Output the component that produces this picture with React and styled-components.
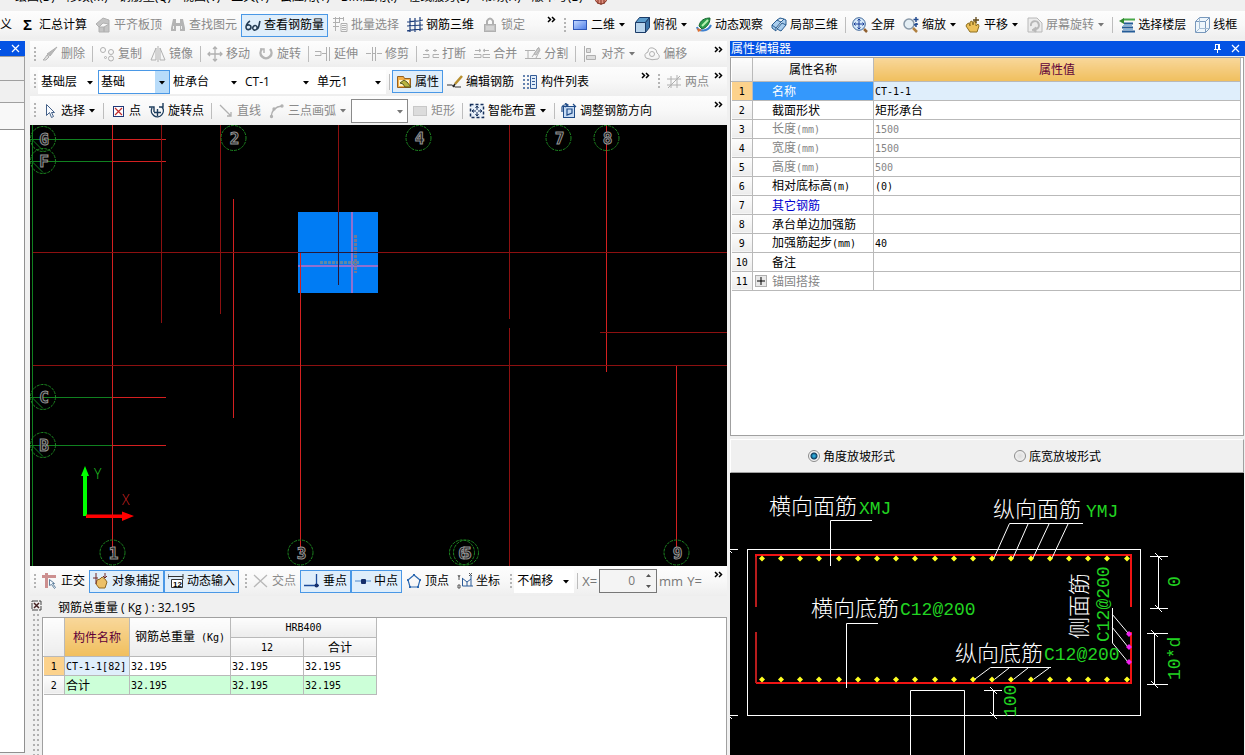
import React from "react";
import styled, { createGlobalStyle, css } from "styled-components";

const Global = createGlobalStyle`
  *, *::before, *::after { box-sizing: border-box; }
  body { margin: 0; background: #f0f0f0; }
  body, button, input, select {
    font-family: "Open Sans", "Noto Sans CJK SC", sans-serif;
    font-size: 12px;
    line-height: 16px;
    color: #000;
  }
`;

/* ---------- shell ---------- */
const Window = styled.div`
  display: flex;
  flex-direction: column;
  height: 100vh;
  overflow: hidden;
  background: #f0f0f0;
`;
const MenuBar = styled.nav`
  display: flex;
  align-items: flex-end;
  gap: 11px;
  height: 11px;
  flex: none;
  padding: 0 0 6px 15px;
  overflow: hidden;
  white-space: nowrap;
`;
const MenuItem = styled.button`
  flex: none;
  border: 0;
  padding: 0;
  background: none;
`;
const Body = styled.main`
  flex: 1;
  min-height: 0;
  display: flex;
`;
const Center = styled.section`
  flex: 1;
  min-width: 0;
  display: flex;
  flex-direction: column;
`;

/* ---------- toolbars ---------- */
const Bar = styled.div`
  display: flex;
  flex: none;
  align-items: stretch;
  height: ${(p) => p.$h}px;
  overflow: hidden;
  background: #f0f0f0;
`;
const Group = styled.div`
  display: flex;
  align-items: center;
  min-width: 0;
  overflow: hidden;
  padding-left: ${(p) => (p.$flush ? 0 : 3)}px;
  ${(p) => (p.$w ? css`flex: none; width: ${p.$w}px;` : css`flex: 1;`)}
  background: linear-gradient(#fdfdfd, #f8f8f8 50%, #eeeeee);
`;
const Grip = styled.span`
  flex: none;
  width: 2px;
  height: 15px;
  margin: 0 2px 0 ${(p) => (p.$apart ? 6 : 1)}px;
  background: repeating-linear-gradient(#b4b4b4 0 2px, transparent 2px 4px);
`;
const Sep = styled.span`
  flex: none;
  width: 1px;
  height: 16px;
  margin: 0 2px 0 3px;
  background: #bdbdbd;
`;
const ToolButton = styled.button`
  flex: none;
  display: flex;
  align-items: center;
  gap: 3px;
  height: 23px;
  padding: 0 3px 0 ${(p) => (p.$edge ? 0 : 3)}px;
  white-space: nowrap;
  border: 1px solid ${(p) => (p.$active ? "#4a98e6" : "transparent")};
  border-left-width: ${(p) => (p.$edge ? 0 : 1)}px;
  background: ${(p) => (p.$active ? "#dfeefb" : "transparent")};
  color: ${(p) => (p.disabled ? "#8a8a8a" : "#000")};
`;
const MoreButton = styled.button`
  flex: none;
  display: flex;
  align-self: stretch;
  margin-left: auto;
  padding: 5px 4px 0 0;
  border: 0;
  background: none;
`;
const ComboBox = styled.span`
  flex: none;
  position: relative;
  display: flex;
  width: ${(p) => p.$w}px;
  height: 24px;
  background: #fff;
  border: 1px solid
    ${(p) => (p.$look === "focus" ? "#4a98e6" : p.$look === "box" ? "#8a8a8a" : "#fff")};
  svg {
    position: absolute;
    right: 0;
    top: 0;
    width: 14px;
    height: 22px;
    pointer-events: none;
    background: ${(p) => (p.$look === "focus" ? "#b8dcfa" : "transparent")};
  }
`;
const ComboSelect = styled.select`
  appearance: none;
  width: 100%;
  border: 0;
  padding: 0 14px 0 2px;
  background: transparent;
  outline: 0;
`;
const Unit = styled.label`
  flex: none;
  padding: 0 2px;
  font-size: 13px;
  color: #777;
`;
const Spinner = styled.span`
  flex: none;
  display: flex;
  align-items: center;
  width: 58px;
  height: 24px;
  padding-right: 4px;
  border: 1px solid #777;
  background: #f4f4f4;
`;
const SpinInput = styled.input`
  flex: 1;
  min-width: 0;
  border: 0;
  padding: 0 10px 0 0;
  text-align: right;
  background: none;
  color: #777;
`;

/* ---------- docked panel titles ---------- */
const TitleBar = styled.header`
  display: flex;
  align-items: center;
  justify-content: flex-end;
  gap: 9px;
  flex: none;
  height: 15px;
  padding: 0 5px 0 1px;
  overflow: hidden;
  background: #0453e4;
  color: #fff;
`;
const TitleText = styled.h2`
  margin: 0 auto 0 0;
  font-size: 12px;
  font-weight: 400;
`;
const TitleButton = styled.button`
  flex: none;
  display: flex;
  border: 0;
  padding: 0;
  background: none;
  color: #fff;
`;

const LeftDock = styled.aside`
  flex: none;
  display: flex;
  flex-direction: column;
  width: 25px;
  margin-right: 5px;
  padding-bottom: 2px;
`;
const LeftTab = styled.div`
  flex: none;
  height: ${(p) => p.$h}px;
  border: solid #a0a0a0;
  border-width: 1px 1px 0 0;
  background: ${(p) => p.$bg};
`;
const LeftTree = styled.div`
  flex: 1;
  border: solid #909090;
  border-width: 1px 1px 1px 0;
  background: #fff;
`;

/* ---------- drawing areas ---------- */
const Viewport = styled.div`
  flex: none;
  height: 441px;
  background: #000;
  svg { display: block; width: 100%; height: 100%; }
`;

/* ---------- weight report ---------- */
const Report = styled.section`
  flex: 1;
  min-height: 0;
  display: flex;
`;
const ReportSide = styled.div`
  flex: none;
  display: flex;
  flex-direction: column;
  align-items: center;
  width: 12px;
  padding-top: 4px;
  gap: 3px;
`;
const ReportHandle = styled.span`
  flex: 1;
  width: 6px;
  background:
    radial-gradient(circle at 1px 1px, #b0b0b0 1px, transparent 1px) 0 0 / 4px 5px;
`;
const ReportClose = styled.button`
  display: flex;
  border: 0;
  padding: 0;
  background: none;
`;
const ReportMain = styled.div`
  flex: 1;
  min-width: 0;
  display: flex;
  flex-direction: column;
`;
const ReportTitle = styled.div`
  flex: none;
  height: 21px;
  padding: 4px 0 0 16px;
`;
const ReportSheet = styled.div`
  flex: 1;
  border: solid #a0a0a0;
  border-width: 1px 1px 0 1px;
  background: #fff;
`;

/* ---------- tables ---------- */
const Grid = styled.table`
  border-collapse: collapse;
  table-layout: fixed;
  width: ${(p) => p.$w};
  font-family: "Noto Sans CJK SC", sans-serif;
`;
const headTones = {
  plain: "linear-gradient(#fdfdfd, #ececec)",
  gold: "linear-gradient(#f8d79a, #f0bf5e)",
};
const Head = styled.th`
  height: ${(p) => p.$h}px;
  padding: 0;
  border: 1px solid #b9b9b9;
  border-top: 0;
  border-left-color: ${(p) => (p.$edge ? "#fff" : "#b9b9b9")};
  font-weight: 400;
  white-space: nowrap;
  background: ${(p) => headTones[p.$tone || "plain"]};
  color: ${(p) => (p.$tone === "gold" ? "#600038" : "#000")};
`;
const RowNo = styled.th`
  height: 19px;
  padding: 0;
  border: 1px solid #b9b9b9;
  border-left: 0;
  font-weight: 400;
  background: ${(p) => (p.$on ? "#fcd28c" : "linear-gradient(#fdfdfd, #ececec)")};
`;
const Cell = styled.td`
  height: 19px;
  padding: 0 1px;
  border: 1px solid #b9b9b9;
  line-height: 16px;
  white-space: nowrap;
  color: ${(p) => p.$color || "#000"};
  background: ${(p) => p.$bg || "#fff"};
`;
const NameBox = styled.span`
  display: flex;
  align-items: center;
  gap: 5px;
  padding-left: ${(p) => (p.$expand ? 1 : 18)}px;
`;
const Expand = styled.button`
  display: flex;
  padding: 1px;
  border: 1px solid #b0b0b0;
  background: #e8e8e8;
`;
const MonoText = styled.span`
  font-family: "DejaVu Sans Mono", monospace;
  font-size: 10px;
`;

/* ---------- property editor ---------- */
const RightDock = styled.aside`
  flex: none;
  display: flex;
  flex-direction: column;
  width: 515px;
  margin-left: 3px;
`;
const PropSheet = styled.div`
  flex: none;
  height: 379px;
  margin: 1px 1px 0 0;
  padding: 0 2px 0 0;
  border: 1px solid #a0a0a0;
  background: #fff;
`;
const RadioStrip = styled.div`
  flex: none;
  display: grid;
  grid-template-columns: 206px 206px;
  align-items: center;
  height: 34px;
  margin: 3px 1px 0 0;
  padding-left: 77px;
  border: 1px solid #a0a0a0;
  border-color: #fff #a0a0a0 #a0a0a0 #fff;
`;
const RadioLabel = styled.label`
  display: flex;
  align-items: center;
  gap: 3px;
  font-family: "Noto Sans CJK SC", sans-serif;
`;
const Radio = styled.input`
  appearance: none;
  width: 12px;
  height: 12px;
  margin: 0;
  border: 1px solid #8c8c8c;
  border-radius: 50%;
  background: radial-gradient(circle, #dcdcdc, #f8f8f8);
  &:checked {
    background: radial-gradient(circle, #2aa8d8 0 1px, #123c5c 3px, #f4f4f4 4px);
  }
`;
const Section = styled.div`
  flex: 1;
  min-height: 0;
  margin-right: 1px;
  background: #000;
  svg { display: block; width: 514px; height: 282px; }
`;

/* ---------- icons ---------- */
const G = "#b0b0b0";
const art = {
  sigma: <text x="3" y="13" fontSize="15" fontWeight="700" fontFamily="Liberation Sans">Σ</text>,
  level: <g fill="#c4c4c4" stroke={G}><path d="M1 7l7-6 6 2v4l-6-1-4 4z" /><path d="M4 10h5v5H4zM9 10l5-3v8H9z" /></g>,
  find: <g fill="#b4b4b4"><path d="M3 2h3v4h4V2h3l2 9v3h-5V9H6v5H1v-3z" /><path d="M3 9h1v3H3zM11 9h1v3h-1z" fill="#eee" /></g>,
  glasses: <g fill="none" stroke="#243c54" strokeWidth="1.6"><path d="M5 4C3 5 1 8 1 10c0 4 5 3 5 0 0-2-3-3-5-1" /><path d="M8 12c-1-3 3-5 4-2 1 3-3 4-4 2M12 12c2 0 2-5 3-8" /></g>,
  batch: <g fill="none" stroke={G}><path d="M1 1.5h10M1 5.5h7M1 9.5h6M3.500 0v14M7.500 0v6M11.500 0v4" /><path d="M9 6.500h6v8H9zM10 8.500h4M10 10.500h4M10 12.500h4" /></g>,
  rebar3d: <g fill="none" stroke="#1f3f7c" strokeWidth="1.200"><path d="M3 1v14M8 1v14M13 0v14M0 5c5-1 9 0 16-2M0 9c5-1 9 0 16-1M0 14c5-2 9-1 16-2" /></g>,
  lock: <g fill="#c2c2c2" stroke={G}><path d="M5 7V4q3-5 6 0v3" fill="none" strokeWidth="2" /><rect x="2.500" y="7.500" width="11" height="7" /><path d="M4 10h8M4 12h8" stroke="#e6e6e6" /></g>,
  plane: <><defs><linearGradient id="pl" x2="1" y2="1"><stop stopColor="#c8dcff" /><stop offset="1" stopColor="#4c7ce8" /></linearGradient></defs><rect x="1.500" y="3.500" width="13" height="9" fill="url(#pl)" stroke="#3058b8" /></>,
  cube: <g stroke="#1c3c68"><path d="M1.500 5.500h10v10h-10z" fill="#b8d4ec" /><path d="M1.500 5.500l4-5h10l-4 5z" fill="#5c9ccc" /><path d="M15.500.5v10l-4 5v-10z" fill="#3c74a8" /></g>,
  orbit: <><path d="M3 9C4 3 9 1 14 1c0 6-4 10-8 11z" fill="#2c9c4c" stroke="#186830" /><path d="M6 9L12 3" stroke="#b8f0b0" strokeWidth="2" /><path d="M1 10c1 5 11 5 14-2" fill="none" stroke="#3c80d0" strokeWidth="2" /><path d="M1 11l1 4 4-2z" fill="#e07030" /></>,
  local3d: <g fill="#a8ccec" stroke="#285c90"><path d="M1 8l5-5 4 2-5 6zM6 12l5-6 4 2-5 6zM1 8v3l4 3v-3M10 5l3-3 2 1v5" /><path d="M6 3l3-2 4 1" /></g>,
  full: <g fill="none"><circle cx="7" cy="7" r="6.300" fill="#d4e8f8" stroke="#3c6498" /><path d="M7 2v10M2 7h10M5.500 3.500L7 2l1.500 1.500M5.500 10.500L7 12l1.500-1.500M3.500 5.500L2 7l1.500 1.500M10.500 5.500L12 7l-1.500 1.500" stroke="#183c98" /><path d="M12 12l3 3" stroke="#906030" strokeWidth="2.500" /></g>,
  zoom: <g fill="none"><circle cx="6" cy="7" r="5" fill="#e4eef4" stroke="#8898a8" strokeWidth="1.500" /><path d="M10 11l4 4" stroke="#b08040" strokeWidth="2.500" /><path d="M13 0v5M10.500 2.500h5M11 8l4-1M13 6v4" stroke="#244c90" strokeWidth="1.500" /></g>,
  pan: <><path d="M2 7l2-1 1 3V5l2-1 1 4 1-4 2 1v4l2-2 1 2-2 6H5L1 9z" fill="#ecc058" stroke="#907020" /><path d="M11 0v6M8 3h6" stroke="#604818" strokeWidth="1.300" /></>,
  screenrot: <g fill="none" stroke="#b8b8b8"><path d="M1 1h9l5 5v9H1z" fill="#ececec" /><path d="M4 9a4 4 0 1 1 5 3" strokeWidth="2" /><path d="M5 13l4-3v5z" fill="#b8b8b8" /></g>,
  floor: <><path d="M4 2.500h12" stroke="#48a848" strokeWidth="2" /><path d="M0 4l5-3v6z" fill="#308830" /><path d="M5 6.500h9M3 10.500h11M3 14.500h13" stroke="#245c98" strokeWidth="2" /><path d="M4 8.500h9M4 12.500h10" stroke="#84b4dc" /></>,
  wire: <g fill="#eef6fc" stroke="#7898bc"><path d="M1.500 4.500h10v11h-10zM1.500 4.500l4-4h10l-4 4M15.500.5v11l-4 4" /><path d="M5.500 1v10.500H15M5.500 11.500l-4 4" fill="none" stroke="#a4bcd4" /></g>,
  erase: <g fill="#b8b8b8" stroke={G}><path d="M15 1L8 10l-3-2z" /><path d="M5 9l2 2-3 3H1l2-2z" fill="#ddd" /></g>,
  copy: <g fill="none" stroke={G}><circle cx="4" cy="4" r="2.500" /><circle cx="12" cy="6" r="2.500" /><circle cx="12" cy="12.500" r="2.500" /><circle cx="6.500" cy="11.500" r="1" /></g>,
  mirror: <g fill="none" stroke={G}><path d="M6 2v12H1zM10 2v12h5zM8 0v16" /></g>,
  move: <g fill="none" stroke={G} strokeWidth="1.300"><path d="M8 1v14M1 8h14M6 3l2-2 2 2M6 13l2 2 2-2M3 6L1 8l2 2M13 6l2 2-2 2" /></g>,
  rotate: <g fill="none" stroke="#b4b4b4" strokeWidth="2.500"><path d="M4 3a5.500 5.500 0 1 0 8 0" /><path d="M2 3h4v4" strokeWidth="1.500" /></g>,
  extend: <g fill="none" stroke={G}><path d="M0 5.500h6v4H0M7 7.500h4M11.500 1v14M14.500 1v14" /></g>,
  trim: <g fill="none" stroke={G}><path d="M0 7.500h5M11 7.500h5M6.500 1v14M9.500 1v14M6 7.500h4" /></g>,
  brk: <g fill="none" stroke={G}><path d="M0 11.500h6v-3H0M16 11.500h-6v-3h6M2 4.500h4M10 4.500h4M4 3v3M12 3v3" /></g>,
  join: <g fill="none" stroke={G}><path d="M0 11.500h7v-3H0M16 11.500H9v-3h7M1 4.500h5M10 4.500h5M5 3l2 1.500L5 6M11 3L9 4.500 11 6" /></g>,
  split: <g fill="none" stroke={G}><path d="M0 4.500h10M0 12.500h16M3 4v8M14 1L7 11M15 4l-4 8" /><path d="M9 8l4-6 2 1-4 6z" fill="#ccc" /></g>,
  align: <g fill="#ddd" stroke={G}><path d="M2.500 0v16" /><path d="M4.500 2.500h4v4h-4zM4.500 9.500h9v4h-9z" /></g>,
  offset: <g fill="none" stroke={G}><path d="M2 12q-3-4 2-6 0-5 5-4 4 1 4 5 4 3 1 6-6 2-12-1z" /><circle cx="8" cy="8" r="2.500" /></g>,
  props: <><path d="M1.500 2.500h6l1 2h6v9h-13z" fill="#f4b048" stroke="#98601c" /><path d="M3 6h10v6H3z" fill="#fff4c8" /><path d="M4 9l4-3 3 2 4 5H9l-2-3z" fill="#b8b440" stroke="#585820" /></>,
  editbar: <g fill="none"><path d="M0 11h5l3 2h6" stroke="#333" /><path d="M15 2L8 10" stroke="#b89030" strokeWidth="2.500" /><path d="M8 10l-2 3" stroke="#222" strokeWidth="1.500" /></g>,
  list: <g fill="none" stroke="#345c98"><path d="M1 2h2M5 2h2M1 6h2M5 6h2M1 10h2M5 10h2M1 14h2M5 14h2" strokeWidth="1.500" /><path d="M8.500 1.500h6v13h-6z" fill="#e0ecf8" /><path d="M10 4.500h3M10 7.500h3M10 10.500h3" /></g>,
  two: <g fill="none" stroke={G}><path d="M5 2v12M11 1v13M1 5h14M1 11h14M2 14L14 2" /></g>,
  pointer: <path d="M4.500 1.500v11l3-3 2 5 2-1-2-4h3z" fill="#f8fbff" stroke="#446088" />,
  point: <g fill="none"><rect x="3.500" y="3.500" width="10" height="10" fill="#fff" stroke="#203878" /><path d="M5 5l7 7M12 5l-7 7" stroke="#c02828" strokeWidth="1.200" /></g>,
  rotpoint: <g fill="none" stroke="#1c3c5c" strokeWidth="1.400"><path d="M3 5a6 6 0 1 0 10-1M0 4h5v5" /><path d="M8.500 6v7M5 9.500h7M10 4h4V0" /></g>,
  line: <path d="M2 2l11 11M13 9v4H9" fill="none" stroke={G} strokeWidth="1.300" />,
  arc: <g fill="none" stroke={G} strokeWidth="1.300"><path d="M2 14Q3 4 13 3" /><circle cx="2.500" cy="13.500" r="1" /><circle cx="5" cy="6" r="1" /><circle cx="13" cy="3" r="1" /></g>,
  rect: <rect x="1.500" y="3.500" width="13" height="9" fill="#dcdcdc" stroke="#c8c8c8" />,
  smart: <g fill="none"><rect x="1.500" y="1.500" width="13" height="13" fill="#e8f0fa" stroke="#16305c" strokeWidth="1.500" strokeDasharray="3 2" /><path d="M8 3v4M8 9v4M3 8h4M9 8h4M6.500 5L8 3l1.500 2M6.500 11L8 13l1.500-2M5 6.500L3 8l2 1.500M11 6.500L13 8l-2 1.500" stroke="#16305c" /></g>,
  adjust: <g fill="none"><rect x="2.500" y="3.500" width="11" height="11" fill="#c8dcf4" stroke="#204c88" /><path d="M6 12V6h5v4zM1 9V4q1-3 5-2M4 0l3 2-3 2M12 1l3 3" stroke="#204c88" strokeWidth="1.200" /></g>,
  ortho: <g fill="none"><path d="M0 3.500h14M4.500 0v15" stroke="#cc8f8f" strokeWidth="3" /><path d="M7.500 6.500v6l2-1 3 4 1-1-3-4h2z" fill="#f4f8fc" stroke="#60809c" /></g>,
  snap: <><path d="M4 7l3-1 2-2 3 2 2 3-2 6H6l-3-4z" fill="#ecc068" stroke="#906820" /><path d="M0 5h5M3 0v11M12 0v5M10 3l2 2 2-2" fill="none" stroke="#702828" /></>,
  dyn: <><path d="M0 3.500h15M0 1v5M15 1v5" stroke="#333" /><path d="M3.500 6.500h11v8h-11z" fill="#fff" stroke="#333" /><text x="5" y="14" fontSize="8" fontWeight="700" fontFamily="Liberation Sans">12</text></>,
  cross: <path d="M1 2l13 12M14 2L1 14" stroke="#b8b8b8" strokeWidth="1.300" />,
  perp: <g fill="none" stroke="#1c4c9c" strokeWidth="1.300"><path d="M0 12.500h15M12.500 1v11" /><circle cx="12.500" cy="12.500" r="2" fill="#16306c" stroke="none" /></g>,
  mid: <g><path d="M0 8h16" stroke="#4c88cc" /><rect x="6" y="6" width="5" height="5" rx="1" fill="#16306c" /></g>,
  vertex: <g fill="none" stroke="#2c68b0"><path d="M8 2l6 5-2 7H4L2 7z" strokeWidth="1.200" /><path d="M8 1v2M1 7h2M13 7h2M4 13v2M12 13v2" strokeWidth="2" /></g>,
  coord: <g fill="none" stroke="#2c5c98"><path d="M5.500 5v8H16M5 5l5 4 4-3M10 9v4M14 2v11" /><path d="M1 2l1 2 1-2M2 4v3M1 12h2v3H1zM12 0l3 3M15 0l-3 3" stroke="#555" /></g>,
};
const Svg16 = styled.svg`
  flex: none;
  width: 16px;
  height: 16px;
`;
const Icon = ({ name }) => (
  <Svg16 viewBox="0 0 16 16" aria-hidden="true">{art[name]}</Svg16>
);
const Down = ({ dim }) => (
  <svg width="8" height="4" viewBox="0 0 8 4" aria-hidden="true">
    <path d="M1 0h6L4 3.500z" fill={dim ? "#777" : "#000"} />
  </svg>
);
const More = () => (
  <MoreButton aria-label="更多">
    <svg width="9" height="7" viewBox="0 0 9 7">
      <path d="M1 1l2.500 2.500L1 6M5 1l2.500 2.500L5 6" fill="none" stroke="#000" strokeWidth="1.500" />
    </svg>
  </MoreButton>
);
const Pin = () => (
  <svg width="9" height="9" viewBox="0 0 9 9">
    <path d="M2.500 0v5M6.500 0v5M2 .5h5M1 5.500h7M4.500 6v3M5.500 0v5" fill="none" stroke="#fff" />
  </svg>
);
const Cross = () => (
  <svg width="9" height="9" viewBox="0 0 9 9">
    <path d="M1 1l7 7M8 1L1 8" stroke="#fff" strokeWidth="1.200" />
  </svg>
);

const Tool = ({ icon, text, off, on, drop, edge }) => (
  <ToolButton disabled={off} $active={on} $edge={edge}>
    {icon && <Icon name={icon} />}
    {text}
    {drop && <Down dim={off} />}
  </ToolButton>
);
const Combo = ({ value, w = 72, look, label }) => (
  <ComboBox $w={w} $look={look}>
    <ComboSelect aria-label={label} defaultValue={value}>
      <option>{value}</option>
    </ComboSelect>
    <svg viewBox="0 0 14 22"><path d="M4 10h6l-3 3.500z" fill={look === "box" ? "#777" : "#000"} /></svg>
  </ComboBox>
);

/* Latin runs are set in the narrow fixed-width face of the data grids. */
const Mixed = ({ children }) =>
  String(children)
    .split(/([\x20-\x7e]+)/)
    .filter(Boolean)
    .map((part, i) =>
      /[\x20-\x7e]/.test(part) ? <MonoText key={i}>{part}</MonoText> : part
    );

/* ---------- plan view ---------- */
const dim = "#8c1010";
const red = "#d42020";
const planLines = [
  [112.5, 125, 112.5, 553, red], [161.5, 125, 161.5, 323, dim], [220.5, 125, 220.5, 314, dim],
  [233.5, 199, 233.5, 418, red], [338.5, 125, 338.5, 212, dim], [509.5, 125, 509.5, 319, dim],
  [509.5, 328, 509.5, 566, dim], [606.5, 125, 606.5, 372, red], [676.5, 365, 676.5, 553, red],
  [33, 252.5, 727, 252.5, dim], [33, 365.5, 727, 365.5, dim], [600, 332.5, 727, 332.5, dim],
];
const axisMarks = [
  [43, 139, "G"], [43, 161, "F"], [43, 397, "C"], [43, 445, "B"],
  [233.5, 138, "2"], [418.5, 138, "4"], [558.5, 138, "7"], [606.5, 138, "8"],
  [112.5, 552.5, "1"], [300.5, 552.5, "3"], [462, 552.5, "6"], [466, 552.5, "5"], [676.5, 552.5, "9"],
];
const PlanText = styled.text`
  font: 700 16px "DejaVu Sans Mono", monospace;
  text-anchor: middle;
  fill: #101010;
  stroke: #949494;
  stroke-width: 1px;
`;
const AxisText = styled.text`
  font: 300 14px "Open Sans", sans-serif;
  fill: ${(p) => p.$c};
`;
const Plan = () => (
  <svg viewBox="30 125 697 441" preserveAspectRatio="xMinYMin slice">
    <path d="M32.500 125v441" stroke="#108020" />
    {[139.5, 161.5, 397.5, 445.5].map((y) => (
      <g key={y}>
        <path d={`M31 ${y}h81M32 ${y}l11 11`} stroke="#108020" fill="none" />
        <path d={`M112 ${y}h54`} stroke={red} />
      </g>
    ))}
    {planLines.map(([x1, y1, x2, y2, c], i) => (
      <line key={i} x1={x1} y1={y1} x2={x2} y2={y2} stroke={c} />
    ))}
    <rect x="298" y="212" width="80" height="81" fill="#007cf4" />
    <path d="M352 212v81M298 266h80" stroke="#9070d0" strokeWidth="2" />
    <path d="M320 262.500h39" stroke="#5c88a8" strokeWidth="3" strokeDasharray="3 1" />
    <path d="M355.500 235v38" stroke="#707898" strokeWidth="3" strokeDasharray="3 1" />
    <path d="M338.500 212v73M298 252.500h80" stroke="#281838" />
    <path d="M300.500 253v300" stroke={red} />
    {axisMarks.map(([x, y, t]) => (
      <g key={t}>
        <circle cx={x} cy={y} r="12.500" fill="none" stroke="#1c8420" strokeDasharray="3 1" />
        <PlanText x={x + 1} y={y + 6}>{t}</PlanText>
      </g>
    ))}
    <path d="M83 516v-40h-2l4-10 4 10h-2v40z" fill="#00ff00" />
    <path d="M86 514.500h36v-3l12 4.500-12 5v-3H86z" fill="#ff0000" />
    <AxisText x="94" y="479" $c="#20c020">Y</AxisText>
    <AxisText x="122" y="505" $c="#d02020">X</AxisText>
  </svg>
);

/* ---------- cap section drawing ---------- */
const barX = [762, 781, 800, 819, 839, 858, 877, 896, 915, 935, 954, 973, 992, 1011, 1031, 1050, 1069, 1088, 1107, 1127];
const Dot = ({ x, y, c = "#ffff20" }) => (
  <path d={`M${x - 3} ${y}l3-3 3 3-3 3z`} fill={c} />
);
const CnText = styled.text`
  font: 300 22px "Noto Sans CJK SC", sans-serif;
  fill: #fff;
`;
const SpecText = styled.text`
  font: 18px "Liberation Mono", monospace;
  fill: #22d322;
`;
const upright = (x, y) => `translate(${x} ${y}) rotate(-90)`;
const CapSection = () => (
  <svg viewBox="730 473 514 282">
    <g fill="none" stroke="#fff">
      <rect x="747.5" y="549.5" width="393" height="166" />
      <path d="M910.500 760V690.500h54V760" />
      <path d="M730 549.500h8M730 551l2 2M730 715.500h8M730 717l2 2" />
    </g>
    <g fill="none" strokeWidth="2">
      <path d="M756 607V555H1131V607M1131 632V683H756" stroke="#f01414" />
      <path d="M756 557V607M756 632V683" stroke="#b81c1c" />
    </g>
    {barX.map((x) => (
      <g key={x}><Dot x={x} y={558.5} /><Dot x={x} y={679.5} /></g>
    ))}
    <g fill="none" stroke="#fff">
      <path d="M872 520.500H830.500V566M878 623.500H846.500V688" />
      <path d="M1083 523.500H1009.500L994 558M1028 524L1013 558M1049 524L1033 558M1068 524L1052 558" />
      <path d="M1051 667.500H990.500L975 679M1009 668L995 679M1028 668L1014 679M1049 668L1034 679" />
      <path d="M1112.500 608V643L1128 662M1112 614L1128 633M1112 627L1128 647" />
      <path d="M1158.500 556V609M1150 556.500h18M1150 608.500h18M1155 553l7 7M1155 605l7 7" />
      <path d="M1154.500 633V685M1147 633.500h21M1147 684.500h21M1151 630l7 7M1151 681l7 7" />
      <path d="M993.500 690V716M984 690.500h18M990 687l7 7M990 712l7 7" />
    </g>
    <Dot x={1129} y={634} c="#f020f0" />
    <Dot x={1129} y={647} c="#f020f0" />
    <Dot x={1129} y={662} c="#f020f0" />
    <CnText x="769" y="514">横向面筋</CnText>
    <SpecText x="859" y="514">XMJ</SpecText>
    <CnText x="993" y="517">纵向面筋</CnText>
    <SpecText x="1086" y="517">YMJ</SpecText>
    <CnText x="811" y="616">横向底筋</CnText>
    <SpecText x="900" y="615">C12@200</SpecText>
    <CnText x="955" y="661">纵向底筋</CnText>
    <SpecText x="1044" y="660">C12@200</SpecText>
    <CnText transform={upright(1087, 639)}>侧面筋</CnText>
    <SpecText transform={upright(1109, 642)}>C12@200</SpecText>
    <SpecText transform={upright(1180, 587)}>0</SpecText>
    <SpecText transform={upright(1180, 680)}>10*d</SpecText>
    <SpecText transform={upright(1016, 717)}>100</SpecText>
  </svg>
);

/* ---------- data ---------- */
const menus = ["绘图(D)", "修改(M)", "钢筋量(Q)", "视图(V)", "工具(T)", "云应用(Y)", "BIM应用(I)", "在线服务(S)", "帮助(H)", "版本号(B)"];
const gray = "#858585";
const properties = [
  ["名称", "CT-1-1"],
  ["截面形状", "矩形承台"],
  ["长度(mm)", "1500", gray],
  ["宽度(mm)", "1500", gray],
  ["高度(mm)", "500", gray],
  ["相对底标高(m)", "(0)"],
  ["其它钢筋", "", "#0000d0"],
  ["承台单边加强筋", ""],
  ["加强筋起步(mm)", "40"],
  ["备注", ""],
  ["锚固搭接", "", gray],
];

export default function App() {
  return (
    <Window>
      <Global />
      <MenuBar>
        {menus.map((m) => <MenuItem key={m}>{m}</MenuItem>)}
        <svg width="14" height="14" viewBox="0 0 14 14">
          <circle cx="7" cy="7" r="6" fill="#e09080" stroke="#803020" />
          <path d="M4 7v6M7 8v6M10 7v6" stroke="#803020" />
        </svg>
      </MenuBar>
      <Bar $h={28}>
        <Group $w={560} $flush>
          <Tool text="义" edge />
          <Tool icon="sigma" text="汇总计算" />
          <Tool icon="level" text="平齐板顶" off />
          <Tool icon="find" text="查找图元" off />
          <Tool icon="glasses" text="查看钢筋量" on />
          <Tool icon="batch" text="批量选择" off />
          <Tool icon="rebar3d" text="钢筋三维" />
          <Tool icon="lock" text="锁定" off />
          <More />
        </Group>
        <Group>
          <Grip />
          <Tool icon="plane" text="二维" drop />
          <Tool icon="cube" text="俯视" drop />
          <Tool icon="orbit" text="动态观察" />
          <Tool icon="local3d" text="局部三维" />
          <Sep />
          <Tool icon="full" text="全屏" />
          <Tool icon="zoom" text="缩放" drop />
          <Tool icon="pan" text="平移" drop />
          <Tool icon="screenrot" text="屏幕旋转" off drop />
          <Sep />
          <Tool icon="floor" text="选择楼层" />
          <Tool icon="wire" text="线框" />
        </Group>
      </Bar>
      <Bar $h={2} />
      <Body>
        <LeftDock>
          <TitleBar>
            <TitleButton aria-label="固定"><Pin /></TitleButton>
            <TitleButton aria-label="关闭"><Cross /></TitleButton>
          </TitleBar>
          <LeftTab $h={24} $bg="#f0f0f0" />
          <LeftTab $h={22} $bg="#f0f0f0" />
          <LeftTab $h={27} $bg="#f8f8f8" />
          <LeftTree />
        </LeftDock>
        <Center>
          <Bar $h={26}>
            <Group>
              <Grip />
              <Tool icon="erase" text="删除" off />
              <Sep />
              <Tool icon="copy" text="复制" off />
              <Tool icon="mirror" text="镜像" off />
              <Sep />
              <Tool icon="move" text="移动" off />
              <Tool icon="rotate" text="旋转" off />
              <Sep />
              <Tool icon="extend" text="延伸" off />
              <Tool icon="trim" text="修剪" off />
              <Sep />
              <Tool icon="brk" text="打断" off />
              <Tool icon="join" text="合并" off />
              <Tool icon="split" text="分割" off />
              <Sep />
              <Tool icon="align" text="对齐" off drop />
              <Tool icon="offset" text="偏移" off />
              <More />
            </Group>
          </Bar>
          <Bar $h={29}>
            <Group>
              <Grip />
              <Combo value="基础层" label="楼层" w={60} />
              <Combo value="基础" label="构件类别" look="focus" />
              <Combo value="桩承台" label="构件类型" />
              <Combo value="CT-1" label="构件" />
              <Combo value="单元1" label="单元" />
              <Sep />
              <Tool icon="props" text="属性" on />
              <Tool icon="editbar" text="编辑钢筋" />
              <Tool icon="list" text="构件列表" />
              <More />
            </Group>
            <Group $w={73}>
              <Grip />
              <Tool icon="two" text="两点" off />
              <More />
            </Group>
          </Bar>
          <Bar $h={29}>
            <Group>
              <Grip />
              <Tool icon="pointer" text="选择" drop />
              <Sep />
              <Tool icon="point" text="点" />
              <Tool icon="rotpoint" text="旋转点" />
              <Sep />
              <Tool icon="line" text="直线" off />
              <Tool icon="arc" text="三点画弧" off drop />
              <Combo value="" label="画弧方式" w={57} look="box" />
              <Tool icon="rect" text="矩形" off />
              <Sep />
              <Tool icon="smart" text="智能布置" drop />
              <Sep />
              <Tool icon="adjust" text="调整钢筋方向" />
              <More />
            </Group>
          </Bar>
          <Viewport><Plan /></Viewport>
          <Bar $h={30}>
            <Group>
              <Grip />
              <Tool icon="ortho" text="正交" />
              <Tool icon="snap" text="对象捕捉" on />
              <Tool icon="dyn" text="动态输入" on />
              <Grip $apart />
              <Tool icon="cross" text="交点" off />
              <Tool icon="perp" text="垂点" on />
              <Tool icon="mid" text="中点" on />
              <Tool icon="vertex" text="顶点" />
              <Tool icon="coord" text="坐标" />
              <Grip $apart />
              <Combo value="不偏移" label="偏移方式" w={60} />
              <Sep />
              <Unit htmlFor="offset-x">X=</Unit>
              <Spinner>
                <SpinInput id="offset-x" defaultValue="0" disabled />
                <svg width="7" height="16" viewBox="0 0 7 16">
                  <path d="M1 4l2.500-3L6 4zM1 12l2.500 3L6 12z" fill="#555" />
                </svg>
              </Spinner>
              <Unit as="span">mm</Unit>
              <Unit as="span">Y=</Unit>
              <More />
            </Group>
          </Bar>
          <Report>
            <ReportSide>
              <ReportClose aria-label="关闭">
                <svg width="11" height="11" viewBox="0 0 11 11">
                  <path d="M1 1h9v9H1z" fill="#eee" stroke="#444" strokeDasharray="6 1" />
                  <path d="M3 3l5 5M8 3L3 8" stroke="#422" strokeWidth="1.500" />
                </svg>
              </ReportClose>
              <ReportHandle />
            </ReportSide>
            <ReportMain>
              <ReportTitle>钢筋总重量 ( Kg ) : 32.195</ReportTitle>
              <ReportSheet>
                <Grid $w="334px">
                  <colgroup>
                    <col width="21" /><col width="65" /><col width="101" /><col width="73" /><col width="73" />
                  </colgroup>
                  <thead>
                    <tr>
                      <Head rowSpan={2} $edge />
                      <Head rowSpan={2} $tone="gold">构件名称</Head>
                      <Head rowSpan={2}>钢筋总重量<Mixed>{" (Kg)"}</Mixed></Head>
                      <Head colSpan={2} $h={19}><Mixed>HRB400</Mixed></Head>
                    </tr>
                    <tr>
                      <Head $h={19}><Mixed>12</Mixed></Head>
                      <Head $h={19}>合计</Head>
                    </tr>
                  </thead>
                  <tbody>
                    <tr>
                      <RowNo $on><Mixed>1</Mixed></RowNo>
                      <Cell $bg="#dfeefb"><Mixed>CT-1-1[82]</Mixed></Cell>
                      {[0, 1, 2].map((k) => <Cell key={k}><Mixed>32.195</Mixed></Cell>)}
                    </tr>
                    <tr>
                      <RowNo><Mixed>2</Mixed></RowNo>
                      <Cell $bg="#ccffd8">合计</Cell>
                      {[0, 1, 2].map((k) => <Cell key={k} $bg="#ccffd8"><Mixed>32.195</Mixed></Cell>)}
                    </tr>
                  </tbody>
                </Grid>
              </ReportSheet>
            </ReportMain>
          </Report>
        </Center>
        <RightDock>
          <TitleBar>
            <TitleText>属性编辑器</TitleText>
            <TitleButton aria-label="固定"><Pin /></TitleButton>
            <TitleButton aria-label="关闭"><Cross /></TitleButton>
          </TitleBar>
          <PropSheet>
            <Grid $w="100%">
              <colgroup>
                <col width="21" /><col width="121" /><col />
              </colgroup>
              <thead>
                <tr>
                  <Head $h={23} $edge />
                  <Head $h={23}>属性名称</Head>
                  <Head $h={23} $tone="gold">属性值</Head>
                </tr>
              </thead>
              <tbody>
                {properties.map(([name, value, color], i) => (
                  <tr key={name}>
                    <RowNo $on={i === 0}><Mixed>{i + 1}</Mixed></RowNo>
                    <Cell $color={i === 0 ? "#fff" : color} $bg={i === 0 && "#3498fc"}>
                      <NameBox $expand={i === 10}>
                        {i === 10 && (
                          <Expand aria-label="展开">
                            <svg width="8" height="8" viewBox="0 0 8 8">
                              <path d="M4 0v8M0 4h8" stroke="#000" />
                            </svg>
                          </Expand>
                        )}
                        <span><Mixed>{name}</Mixed></span>
                      </NameBox>
                    </Cell>
                    <Cell $color={color} $bg={i === 0 && "#dfeefb"}><Mixed>{value}</Mixed></Cell>
                  </tr>
                ))}
              </tbody>
            </Grid>
          </PropSheet>
          <RadioStrip role="radiogroup" aria-label="放坡形式">
            <RadioLabel><Radio type="radio" name="slope" defaultChecked />角度放坡形式</RadioLabel>
            <RadioLabel><Radio type="radio" name="slope" />底宽放坡形式</RadioLabel>
          </RadioStrip>
          <Section><CapSection /></Section>
        </RightDock>
      </Body>
    </Window>
  );
}
